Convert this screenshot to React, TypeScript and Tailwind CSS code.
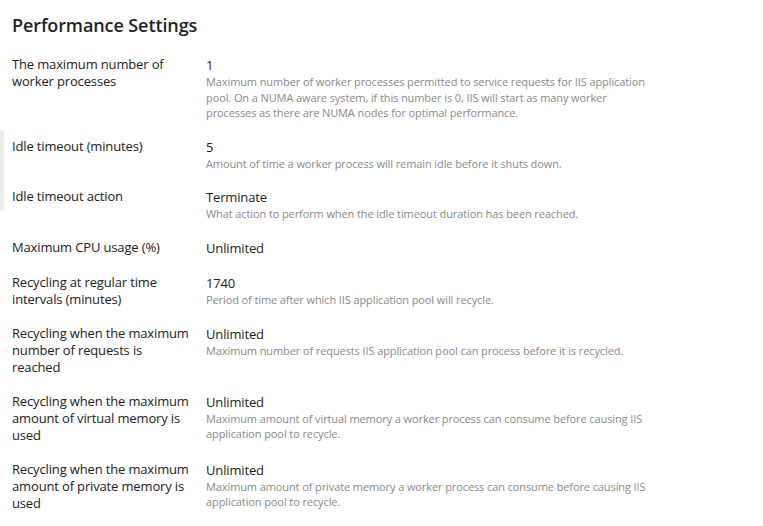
import { FC } from "react";

interface SettingRow {
  label: string;
  value: string;
  description?: string;
}

const rows: SettingRow[] = [
  {
    label: "The maximum number of worker processes",
    value: "1",
    description:
      "Maximum number of worker processes permitted to service requests for IIS application pool. On a NUMA aware system, if this number is 0, IIS will start as many worker processes as there are NUMA nodes for optimal performance.",
  },
  {
    label: "Idle timeout (minutes)",
    value: "5",
    description: "Amount of time a worker process will remain idle before it shuts down.",
  },
  {
    label: "Idle timeout action",
    value: "Terminate",
    description: "What action to perform when the idle timeout duration has been reached.",
  },
  {
    label: "Maximum CPU usage (%)",
    value: "Unlimited",
  },
  {
    label: "Recycling at regular time intervals (minutes)",
    value: "1740",
    description: "Period of time after which IIS application pool will recycle.",
  },
  {
    label: "Recycling when the maximum number of requests is reached",
    value: "Unlimited",
    description: "Maximum number of requests IIS application pool can process before it is recycled.",
  },
  {
    label: "Recycling when the maximum amount of virtual memory is used",
    value: "Unlimited",
    description:
      "Maximum amount of virtual memory a worker process can consume before causing IIS application pool to recycle.",
  },
  {
    label: "Recycling when the maximum amount of private memory is used",
    value: "Unlimited",
    description:
      "Maximum amount of private memory a worker process can consume before causing IIS application pool to recycle.",
  },
];

const App: FC = () => {
  return (
    <div
      className="relative w-[763px] h-[526px] overflow-hidden bg-white text-[#222]"
      style={{ fontFamily: '"Open Sans", "Liberation Sans", sans-serif' }}
    >
      {/* left edge scroll marker */}
      <div className="absolute left-0 top-[130px] w-[4px] h-[81px] bg-[#ebebeb] rounded-r-[3px]"></div>

      <div className="pl-3 pt-[13px]">
        <h1 className="text-[18px] leading-[25px] font-semibold tracking-[-0.1px] text-[#1f1f1f]">
          Performance Settings
        </h1>

        <div className="mt-[18px] flex flex-col gap-[17px]">
          {rows.map((row) => (
            <div key={row.label} className="flex">
              <div className="w-[194px] pr-4 text-[13px] leading-[17px] tracking-[-0.15px]">{row.label}</div>
              <div className="w-[450px]">
                <div className="text-[13px] leading-[18px] tracking-[-0.15px]">{row.value}</div>
                {row.description && (
                  <div className="text-[11px] leading-[15.5px] tracking-[-0.1px] text-[#8a8a8a]">
                    {row.description}
                  </div>
                )}
              </div>
            </div>
          ))}
        </div>
      </div>
    </div>
  );
};

export default App;
